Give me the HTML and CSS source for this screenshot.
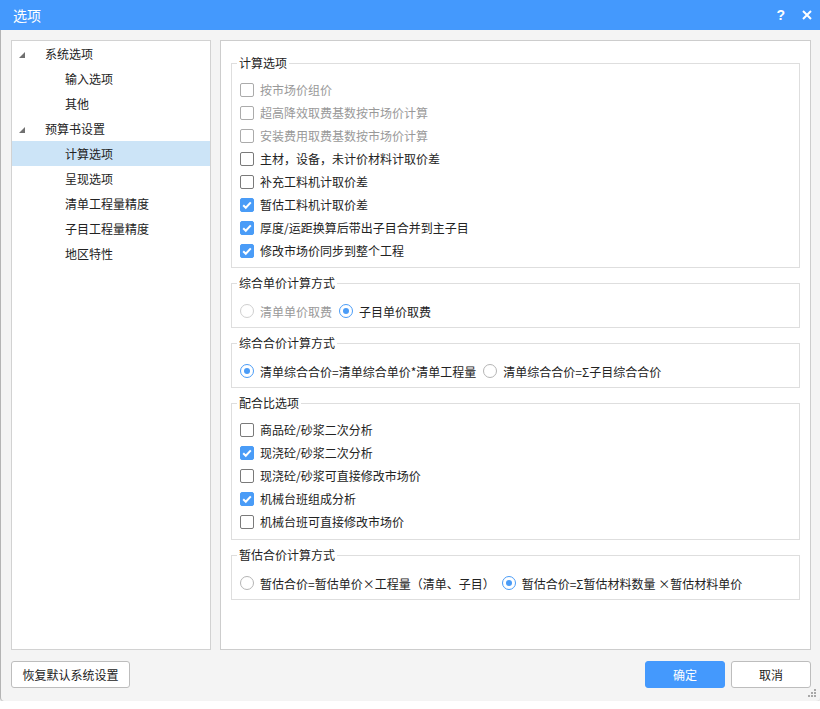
FILE: index.html
```html
<!DOCTYPE html>
<html lang="zh-CN">
<head>
<meta charset="utf-8">
<title>选项</title>
<link rel="stylesheet" href="styles.css">
</head>
<body>
<div class="dialog">
  <div class="titlebar">
    <span class="title">选项</span>
    <span class="tb-btns">
      <span class="tb-help">?</span>
      <svg class="tb-close" width="10" height="10" viewBox="0 0 10 10"><path d="M1 1 L9 9 M9 1 L1 9" stroke="#fff" stroke-width="2" fill="none"/></svg>
    </span>
  </div>
  <div class="main">
    <div class="tree">
      <div class="node l1"><span class="caret"></span>系统选项</div>
      <div class="node l2">输入选项</div>
      <div class="node l2">其他</div>
      <div class="node l1"><span class="caret"></span>预算书设置</div>
      <div class="node l2 selected">计算选项</div>
      <div class="node l2">呈现选项</div>
      <div class="node l2">清单工程量精度</div>
      <div class="node l2">子目工程量精度</div>
      <div class="node l2">地区特性</div>
    </div>
    <div class="content">
      <fieldset class="group first">
        <legend>计算选项</legend>
        <div class="row disabled"><span class="cb"></span>按市场价组价</div>
        <div class="row disabled"><span class="cb"></span>超高降效取费基数按市场价计算</div>
        <div class="row disabled"><span class="cb"></span>安装费用取费基数按市场价计算</div>
        <div class="row"><span class="cb"></span>主材，设备，未计价材料计取价差</div>
        <div class="row"><span class="cb"></span>补充工料机计取价差</div>
        <div class="row"><span class="cb checked"><svg width="14" height="14" viewBox="0 0 14 14"><path d="M3.2 7.2 L5.8 9.8 L10.8 4.4" stroke="#fff" stroke-width="2" fill="none"/></svg></span>暂估工料机计取价差</div>
        <div class="row"><span class="cb checked"><svg width="14" height="14" viewBox="0 0 14 14"><path d="M3.2 7.2 L5.8 9.8 L10.8 4.4" stroke="#fff" stroke-width="2" fill="none"/></svg></span>厚度/运距换算后带出子目合并到主子目</div>
        <div class="row"><span class="cb checked"><svg width="14" height="14" viewBox="0 0 14 14"><path d="M3.2 7.2 L5.8 9.8 L10.8 4.4" stroke="#fff" stroke-width="2" fill="none"/></svg></span>修改市场价同步到整个工程</div>
      </fieldset>
      <fieldset class="group radios">
        <legend>综合单价计算方式</legend>
        <div class="rrow">
          <span class="opt disabled"><span class="rb"></span>清单单价取费</span>
          <span class="opt"><span class="rb on"></span>子目单价取费</span>
        </div>
      </fieldset>
      <fieldset class="group radios">
        <legend>综合合价计算方式</legend>
        <div class="rrow">
          <span class="opt"><span class="rb on"></span>清单综合合价=清单综合单价*清单工程量</span>
          <span class="opt"><span class="rb"></span>清单综合合价=Σ子目综合合价</span>
        </div>
      </fieldset>
      <fieldset class="group">
        <legend>配合比选项</legend>
        <div class="row"><span class="cb"></span>商品砼/砂浆二次分析</div>
        <div class="row"><span class="cb checked"><svg width="14" height="14" viewBox="0 0 14 14"><path d="M3.2 7.2 L5.8 9.8 L10.8 4.4" stroke="#fff" stroke-width="2" fill="none"/></svg></span>现浇砼/砂浆二次分析</div>
        <div class="row"><span class="cb"></span>现浇砼/砂浆可直接修改市场价</div>
        <div class="row"><span class="cb checked"><svg width="14" height="14" viewBox="0 0 14 14"><path d="M3.2 7.2 L5.8 9.8 L10.8 4.4" stroke="#fff" stroke-width="2" fill="none"/></svg></span>机械台班组成分析</div>
        <div class="row"><span class="cb"></span>机械台班可直接修改市场价</div>
      </fieldset>
      <fieldset class="group radios">
        <legend>暂估合价计算方式</legend>
        <div class="rrow">
          <span class="opt"><span class="rb"></span>暂估合价=暂估单价×工程量（清单、子目）</span>
          <span class="opt"><span class="rb on"></span>暂估合价=Σ暂估材料数量 ×暂估材料单价</span>
        </div>
      </fieldset>
    </div>
  </div>
  <div class="footer">
    <button class="btn">恢复默认系统设置</button>
    <span class="spacer"></span>
    <button class="btn primary">确定</button>
    <button class="btn">取消</button>
  </div>
  <svg class="grip" width="8" height="8" viewBox="0 0 8 8"><g fill="#a8a8a8"><rect x="6" y="0" width="2" height="2"/><rect x="3" y="3" width="2" height="2"/><rect x="6" y="3" width="2" height="2"/><rect x="0" y="6" width="2" height="2"/><rect x="3" y="6" width="2" height="2"/><rect x="6" y="6" width="2" height="2"/></g></svg>
</div>
</body>
</html>
```

FILE: styles.css
```css
* { box-sizing: border-box; }
html, body { margin: 0; padding: 0; background: #fff; }
body {
  font-family: "Noto Sans CJK SC", "Noto Sans", sans-serif;
  font-size: 12px;
  color: #222;
}
.dialog {
  position: relative;
  width: 820px;
  height: 701px;
  background: #f4f4f4;
  border-left: 1px solid #b4b4b4;
  border-radius: 0 0 4px 4px;
  box-shadow: 0 1px 3px rgba(0,0,0,0.22);
  display: flex;
  flex-direction: column;
}
.titlebar {
  height: 30px;
  margin-left: -1px;
  background: #4499fd;
  color: #fff;
  display: flex;
  align-items: center;
  padding: 0 8px 0 13px;
}
.title { font-size: 14px; line-height: 30px; flex: 1; }
.tb-btns { display: flex; align-items: center; gap: 17px; }
.tb-help { font-family: "Liberation Sans", sans-serif; font-weight: bold; font-size: 14px; line-height: 14px; }
.tb-close { display: block; }
.main {
  display: flex;
  gap: 9px;
  padding: 10px 9px 0 10px;
  height: 620px;
}
.tree {
  width: 200px;
  height: 610px;
  background: #fff;
  border: 1px solid #d2d2d2;
}
.node {
  height: 25px;
  line-height: 25px;
  display: flex;
  align-items: center;
  white-space: nowrap;
}
.node.l1 { padding-left: 7px; }
.node.l2 { padding-left: 53px; }
.node.selected { background: #cce4f7; }
.caret {
  width: 0; height: 0;
  border-style: solid;
  border-width: 0 0 6px 6px;
  border-color: transparent transparent #707070 transparent;
  margin-right: 20px;
  margin-top: 3px;
}
.content {
  width: 591px;
  height: 610px;
  background: #fff;
  border: 1px solid #cdcdcd;
  padding: 14px 10px 0 10px;
  display: flex;
  flex-direction: column;
  gap: 7px;
}
.group {
  margin: 0;
  min-width: 0;
  border: 1px solid #dedede;
  padding: 7px 8px 6px 8px;
}
.group.first { padding-bottom: 5px; }
.group legend {
  padding: 0 2px;
  margin-left: -3px;
  font-size: 12px;
  line-height: 16px;
  color: #222;
}
.row {
  height: 23px;
  display: flex;
  align-items: center;
  white-space: nowrap;
}
.row.disabled { color: #999; }
.cb {
  width: 14px; height: 14px;
  border: 1px solid #7a7a7a;
  border-radius: 2px;
  margin-right: 6px;
  background: #fff;
  flex: none;
  position: relative;
}
.row.disabled .cb { border-color: #ababab; }
.cb.checked { background: #4a9cf7; border-color: #4a9cf7; }
.cb.checked svg { position: absolute; left: -1px; top: -1px; }
.group.radios { padding: 8px 8px 4px 8px; }
.rrow {
  height: 24px;
  display: flex;
  align-items: center;
  white-space: nowrap;
}
.opt { display: flex; align-items: center; margin-right: 7px; }
.opt.disabled { color: #999; }
.rb {
  width: 14px; height: 14px;
  border: 1px solid #b5b5b5;
  border-radius: 50%;
  background: #fff;
  margin-right: 6px;
  flex: none;
  display: flex;
  align-items: center;
  justify-content: center;
}
.opt.disabled .rb { border-color: #cfcfcf; }
.rb.on { border-color: #4a9cf7; }
.rb.on::after {
  content: "";
  width: 6px; height: 6px;
  border-radius: 50%;
  background: #4a9cf7;
}
.footer {
  display: flex;
  align-items: center;
  padding: 11px 9px 0 10px;
  gap: 6px;
}
.spacer { flex: 1; }
.btn {
  height: 27px;
  width: 80px;
  background: #fff;
  border: 1px solid #bdbdbd;
  border-radius: 3px;
  font-family: "Noto Sans CJK SC", "Noto Sans", sans-serif;
  font-size: 12px;
  color: #222;
  padding: 0;
}
.footer .btn:first-child { width: 119px; }
.btn.primary { background: #4499fd; border-color: #4499fd; color: #fff; }
.grip { position: absolute; right: 4px; bottom: 4px; }
```
